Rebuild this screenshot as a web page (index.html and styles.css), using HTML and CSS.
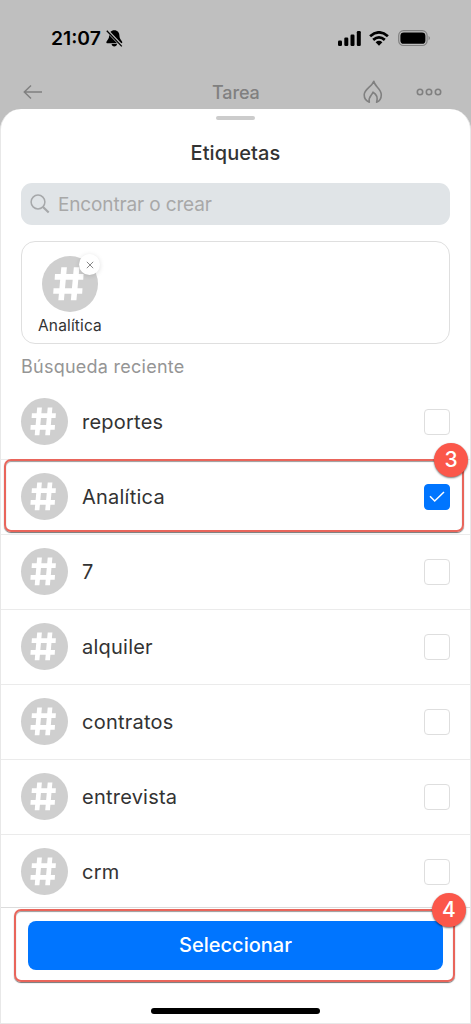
FILE: index.html
```html
<!DOCTYPE html>
<html lang="es">
<head>
<meta charset="utf-8">
<title>Etiquetas</title>
<link rel="stylesheet" href="styles.css">
</head>
<body>
<svg class="defs" width="0" height="0">
  <symbol id="hash" viewBox="0 0 47 47">
    <path d="M16.200 9.400h4.700l-2.500 27.800h-4.700zM26.700 9.400h4.700l-2.500 27.800h-4.700zM10.900 15.200h24l-.3 4.700h-24zM9.700 27.100h24.300l-.3 4.600H9.400z" fill="#fff"/>
  </symbol>
</svg>
<div class="screen">
  <header class="status">
    <span class="time">21:07</span>
    <svg class="bell" width="17" height="17" viewBox="0 0 17 17">
      <path d="M8.300.2C5 .2 3.200 2.700 3.200 5.600c0 3-1.600 4.300-2.600 5.800-.6 1-.1 1.900.8 1.900h13.800c.9 0 1.400-.9.8-1.900-1-1.500-2.600-2.800-2.600-5.800C13.400 2.700 11.600.2 8.300.2zM5.600 14h5.400c0 3.300-5.400 3.300-5.400 0z"/>
      <path d="M.8.3l15.400 16" stroke="#bfbfbf" stroke-width="3"/>
      <path d="M.8.800l15 15.600" stroke="#000" stroke-width="1.300"/>
    </svg>
    <svg class="signal" width="24" height="15" viewBox="0 0 24 15">
      <rect x="0" y="9.500" width="4" height="5.500" rx="1.200"/><rect x="6.300" y="6.500" width="4" height="8.500" rx="1.200"/><rect x="12.500" y="3.500" width="4" height="11.500" rx="1.200"/><rect x="18.800" y="0" width="4" height="15" rx="1.200"/>
    </svg>
    <svg class="wifi" width="20" height="15" viewBox="0 0 20 15" fill="none" stroke="#000" stroke-width="2.800">
      <path d="M1.100 5.200Q10-2.400 18.900 5.200M4.200 8.900Q10 3.900 15.800 8.900"/>
      <path d="M6.600 11.200Q10 8.400 13.400 11.200L10 14.700z" fill="#000" stroke="none"/>
    </svg>
    <svg class="battery" width="33" height="17" viewBox="0 0 33 17">
      <rect x=".7" y=".7" width="28.400" height="14.800" rx="4.800" fill="none" stroke="#808080" stroke-width="1.200"/>
      <rect x="2.400" y="2.400" width="25" height="11.400" rx="3.400"/>
      <path d="M30.600 5.800q2.400 2.300 0 4.600z" fill="#777"/>
    </svg>
  </header>
  <nav class="nav">
    <svg class="back" width="20" height="16" viewBox="0 0 20 16" fill="none" stroke="#808080" stroke-width="1.500"><path d="M19 8H1.300M8 1.500L1.300 8 8 14.500"/></svg>
    <span class="nav-title">Tarea</span>
    <svg class="flame" width="20" height="24" viewBox="0 0 20 24" fill="none" stroke="#808080" stroke-width="1.600" stroke-linejoin="round" stroke-linecap="round">
      <path d="M6.300 22.200C3.200 21 1.200 18.200 1.200 14.800 1.200 8.700 8.800 7 10.800 1.200c.6 5.200 7.500 7.600 7.500 13.600 0 3.400-1.600 6.200-4.700 7.400 1.300-4.200 0-8-3.600-10-.8 3-5.200 4.400-3.700 10z"/>
    </svg>
    <svg class="more" width="26" height="8" viewBox="0 0 26 8" fill="none" stroke="#808080" stroke-width="1.600"><circle cx="4" cy="4" r="2.700"/><circle cx="13" cy="4" r="2.700"/><circle cx="22" cy="4" r="2.700"/></svg>
  </nav>
  <main class="sheet">
    <div class="grabber"></div>
    <h1 class="title">Etiquetas</h1>
    <div class="search">
      <svg width="20" height="20" viewBox="0 0 20 20" fill="none" stroke="#a6a8aa"><circle cx="8" cy="8" r="6.900" stroke-width="1.500"/><path d="M13 13l5.700 5.500" stroke-width="2.200"/></svg>
      <span class="placeholder">Encontrar o crear</span>
    </div>
    <div class="selected">
      <div class="chip">
        <svg class="chip-avatar"><use href="#hash"/></svg>
        <span class="remove"><svg width="8" height="8" viewBox="0 0 8 8" stroke="#888" stroke-width="1"><path d="M.8.8l6.400 6.400M7.200.8L.8 7.200"/></svg></span>
        <span class="chip-label">Analítica</span>
      </div>
    </div>
    <h2 class="section">Búsqueda reciente</h2>
    <div class="list">
      <div class="row"><svg class="avatar"><use href="#hash"/></svg><span class="name">reportes</span><i class="box"></i></div>
      <div class="row"><svg class="avatar"><use href="#hash"/></svg><span class="name">Analítica</span><i class="box checked"><svg width="16" height="12" viewBox="0 0 16 12" fill="none" stroke="#fff" stroke-width="1.500"><path d="M1 5.300l4.700 4.700L15 1"/></svg></i><div class="callout callout-row"><b class="badge">3</b></div></div>
      <div class="row"><svg class="avatar"><use href="#hash"/></svg><span class="name">7</span><i class="box"></i></div>
      <div class="row"><svg class="avatar"><use href="#hash"/></svg><span class="name">alquiler</span><i class="box"></i></div>
      <div class="row"><svg class="avatar"><use href="#hash"/></svg><span class="name">contratos</span><i class="box"></i></div>
      <div class="row"><svg class="avatar"><use href="#hash"/></svg><span class="name">entrevista</span><i class="box"></i></div>
      <div class="row last"><svg class="avatar"><use href="#hash"/></svg><span class="name">crm</span><i class="box"></i></div>
    </div>
    <footer class="footer">
      <div class="button">Seleccionar</div>
      <div class="callout callout-button"><b class="badge">4</b></div>
      <div class="home"></div>
    </footer>
  </main>
</div>
</body>
</html>
```

FILE: styles.css
```css
* { box-sizing: border-box; }
body { margin: 0; font-family: Inter, "Liberation Sans", sans-serif; color: #333; }
svg { display: block; flex: none; }
.defs { position: absolute; }
.screen { width: 471px; height: 1024px; background: #bfbfbf; overflow: hidden; display: flex; flex-direction: column; }
.status { height: 76px; padding-left: 51px; display: flex; align-items: center; flex: none; }
.time { width: 50px; font-size: 19.300px; font-weight: 600; color: #000; white-space: nowrap; }
.bell { margin-left: 5px; }
.signal { margin-left: 215px; }
.wifi { margin-left: 7px; }
.battery { margin-left: 9px; }
.nav { height: 33px; padding: 0 29px 2px 23px; display: flex; align-items: center; flex: none; color: #808080; }
.nav-title { margin-left: 169px; width: 48px; font-size: 18px; font-weight: 500; letter-spacing: -.1px; line-height: 31px; padding-top: 1px; white-space: nowrap; }
.flame { margin-left: 103px; }
.more { margin-left: 33px; }
.sheet { flex: 1; background: #fff; border: 1px solid #e8e8e8; border-top: 0; border-radius: 21px 21px 0 0; display: flex; flex-direction: column; min-height: 0; }
.grabber { width: 39px; height: 4px; margin: 7px auto 0; border-radius: 2px; background: #ccc; flex: none; }
.title { margin: 19px 0 0; height: 28px; line-height: 28px; text-align: center; font-size: 20px; font-weight: 500; letter-spacing: .08px; }
.search { margin: 16px 20px 0; height: 42px; padding-left: 9px; border-radius: 11px; background: #e0e4e7; display: flex; align-items: center; gap: 8px; color: #a8a8a8; font-size: 19px; letter-spacing: -.14px; }
.selected { margin: 16px 20px 0; height: 103px; border: 1px solid #dfdfdf; border-radius: 14px; padding: 14px 0 0 16px; }
.chip { position: relative; width: 64px; display: flex; flex-direction: column; align-items: center; }
.chip-avatar { width: 56px; height: 56px; border-radius: 50%; background: #cfcfcf; }
.chip-label { margin-top: 4px; font-size: 15.500px; letter-spacing: .15px; line-height: 20px; white-space: nowrap; }
.remove { position: absolute; left: 41px; top: -2px; width: 21px; height: 21px; border-radius: 50%; background: #fff; display: flex; align-items: center; justify-content: center; box-shadow: 0 1px 5px rgba(0,0,0,.13); }
.section { margin: 11px 0 0 20px; height: 24px; line-height: 24px; font-size: 18px; font-weight: 400; letter-spacing: .25px; color: #959595; }
.list { margin-top: 6px; }
.row { position: relative; height: 75px; padding: 0 20px; display: flex; align-items: center; border-bottom: 1px solid #ebebeb; }
.last { height: 73px; padding-top: 2px; border-color: #dcdcdc; }
.avatar { width: 47px; height: 47px; margin-bottom: 1px; border-radius: 50%; background: #cfcfcf; }
.name { flex: 1; margin-left: 14px; font-size: 20px; letter-spacing: .23px; line-height: 28px; }
.box { width: 26px; height: 26px; border: 1px solid #dedede; border-radius: 4px; display: flex; align-items: center; justify-content: center; }
.checked { background: #0075ff; border-color: #0075ff; }
.callout { position: absolute; border: 2px solid #e9655b; border-radius: 7px; box-shadow: 0 1px 1px rgba(0,0,0,.55), inset 0 1px 1px rgba(0,0,0,.4); z-index: 2; }
.callout-row { left: 3px; right: 6px; top: -1px; height: 73px; }
.callout-button { left: 13px; right: 15px; top: 1px; height: 73px; }
.badge { position: absolute; right: -6px; top: -18px; width: 34px; height: 34px; border-radius: 50%; background: #fb574a; color: #fff; font-size: 21px; font-weight: 500; line-height: 34px; text-align: center; box-shadow: 0 1px 2px rgba(0,0,0,.55); }
.callout-button .badge { right: -13px; }
.footer { position: relative; flex: 1; padding-top: 13px; }
.button { margin: 0 27px; height: 49px; border-radius: 8px; background: #0075ff; color: #fff; font-size: 20px; font-weight: 500; line-height: 49px; text-align: center; }
.home { width: 169px; height: 6px; margin: 38px auto 0; border-radius: 3px; background: #000; }
```
